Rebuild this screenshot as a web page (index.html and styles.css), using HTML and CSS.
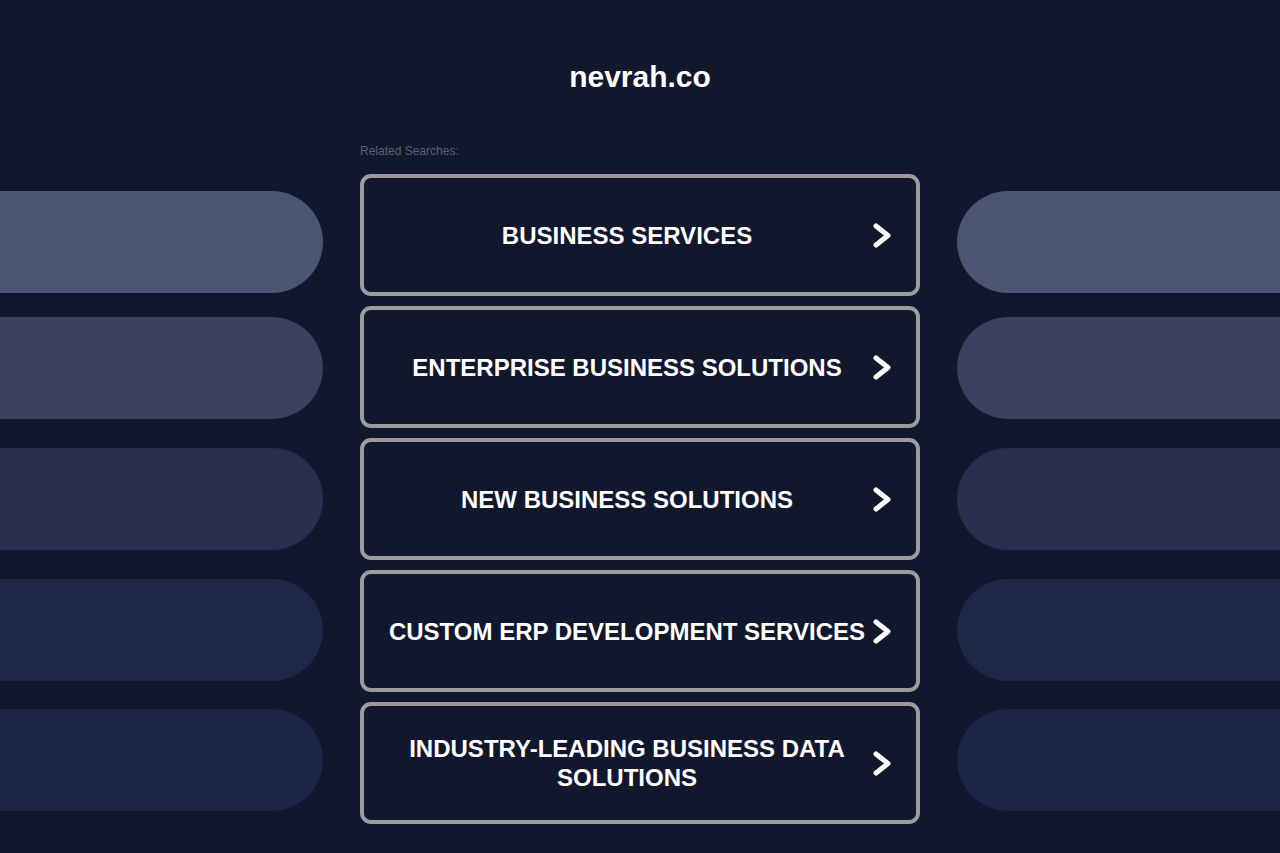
FILE: index.html
```html
<!DOCTYPE html>
<html lang="en">
<head>
<meta charset="utf-8">
<title>nevrah.co</title>
<link rel="stylesheet" href="styles.css">
</head>
<body>
<div class="page">
  <h1 class="domain">nevrah.co</h1>
  <div class="related">Related Searches:</div>
  <div class="grid">
    <div class="side side-left">
      <div class="pill p1"></div>
      <div class="pill p2"></div>
      <div class="pill p3"></div>
      <div class="pill p4"></div>
      <div class="pill p5"></div>
    </div>
    <div class="links">
      <a class="link" href="#"><span class="label">BUSINESS SERVICES</span><svg class="chev" viewBox="0 0 18 25" width="18" height="25"><path d="M3 3 L15 12.5 L3 22" fill="none" stroke="#fff" stroke-width="5" stroke-linecap="round" stroke-linejoin="round"/></svg></a>
      <a class="link" href="#"><span class="label">ENTERPRISE BUSINESS SOLUTIONS</span><svg class="chev" viewBox="0 0 18 25" width="18" height="25"><path d="M3 3 L15 12.5 L3 22" fill="none" stroke="#fff" stroke-width="5" stroke-linecap="round" stroke-linejoin="round"/></svg></a>
      <a class="link" href="#"><span class="label">NEW BUSINESS SOLUTIONS</span><svg class="chev" viewBox="0 0 18 25" width="18" height="25"><path d="M3 3 L15 12.5 L3 22" fill="none" stroke="#fff" stroke-width="5" stroke-linecap="round" stroke-linejoin="round"/></svg></a>
      <a class="link" href="#"><span class="label">CUSTOM ERP DEVELOPMENT SERVICES</span><svg class="chev" viewBox="0 0 18 25" width="18" height="25"><path d="M3 3 L15 12.5 L3 22" fill="none" stroke="#fff" stroke-width="5" stroke-linecap="round" stroke-linejoin="round"/></svg></a>
      <a class="link" href="#"><span class="label">INDUSTRY-LEADING BUSINESS DATA SOLUTIONS</span><svg class="chev" viewBox="0 0 18 25" width="18" height="25"><path d="M3 3 L15 12.5 L3 22" fill="none" stroke="#fff" stroke-width="5" stroke-linecap="round" stroke-linejoin="round"/></svg></a>
    </div>
    <div class="side side-right">
      <div class="pill p1"></div>
      <div class="pill p2"></div>
      <div class="pill p3"></div>
      <div class="pill p4"></div>
      <div class="pill p5"></div>
    </div>
  </div>
</div>
</body>
</html>
```

FILE: styles.css
```css
html, body {
  margin: 0;
  padding: 0;
  background: #11172d;
  height: 100%;
}
body {
  font-family: "Liberation Sans", Arial, sans-serif;
  color: #fff;
  overflow: hidden;
}
.page {
  display: flex;
  flex-direction: column;
  align-items: center;
  padding-top: 59px;
}
.domain {
  margin: 0;
  font-size: 30px;
  line-height: 36px;
  font-weight: bold;
  color: #fff;
}
.related {
  width: 560px;
  margin-top: 49px;
  font-size: 12px;
  line-height: 14px;
  color: #5c6078;
}
.grid {
  margin-top: 16px;
  width: 1280px;
  display: grid;
  grid-template-columns: 323px 560px 323px;
  column-gap: 37px;
}
.side {
  display: flex;
  flex-direction: column;
}
.pill {
  height: 102px;
}
.side-left .pill { border-radius: 0 51px 51px 0; }
.side-right .pill { border-radius: 51px 0 0 51px; }
.p1 { margin-top: 17px; background: #4c5673; }
.p2 { margin-top: 24px; background: #3a4260; }
.p3 { margin-top: 29px; background: #282f4e; }
.p4 { margin-top: 29px; background: #1e2747; }
.p5 { margin-top: 28px; background: #1c2546; }
.links {
  display: flex;
  flex-direction: column;
  gap: 10px;
}
.link {
  box-sizing: border-box;
  height: 122px;
  border: 4px solid #9b9b9e;
  border-radius: 11px;
  display: flex;
  align-items: center;
  padding-left: 20px;
  padding-right: 25px;
  text-decoration: none;
  color: #fff;
}
.label {
  flex: 1;
  text-align: center;
  font-size: 24px;
  line-height: 29px;
  font-weight: bold;
  margin-right: 3px;
}
.chev {
  flex: none;
  display: block;
}
```
